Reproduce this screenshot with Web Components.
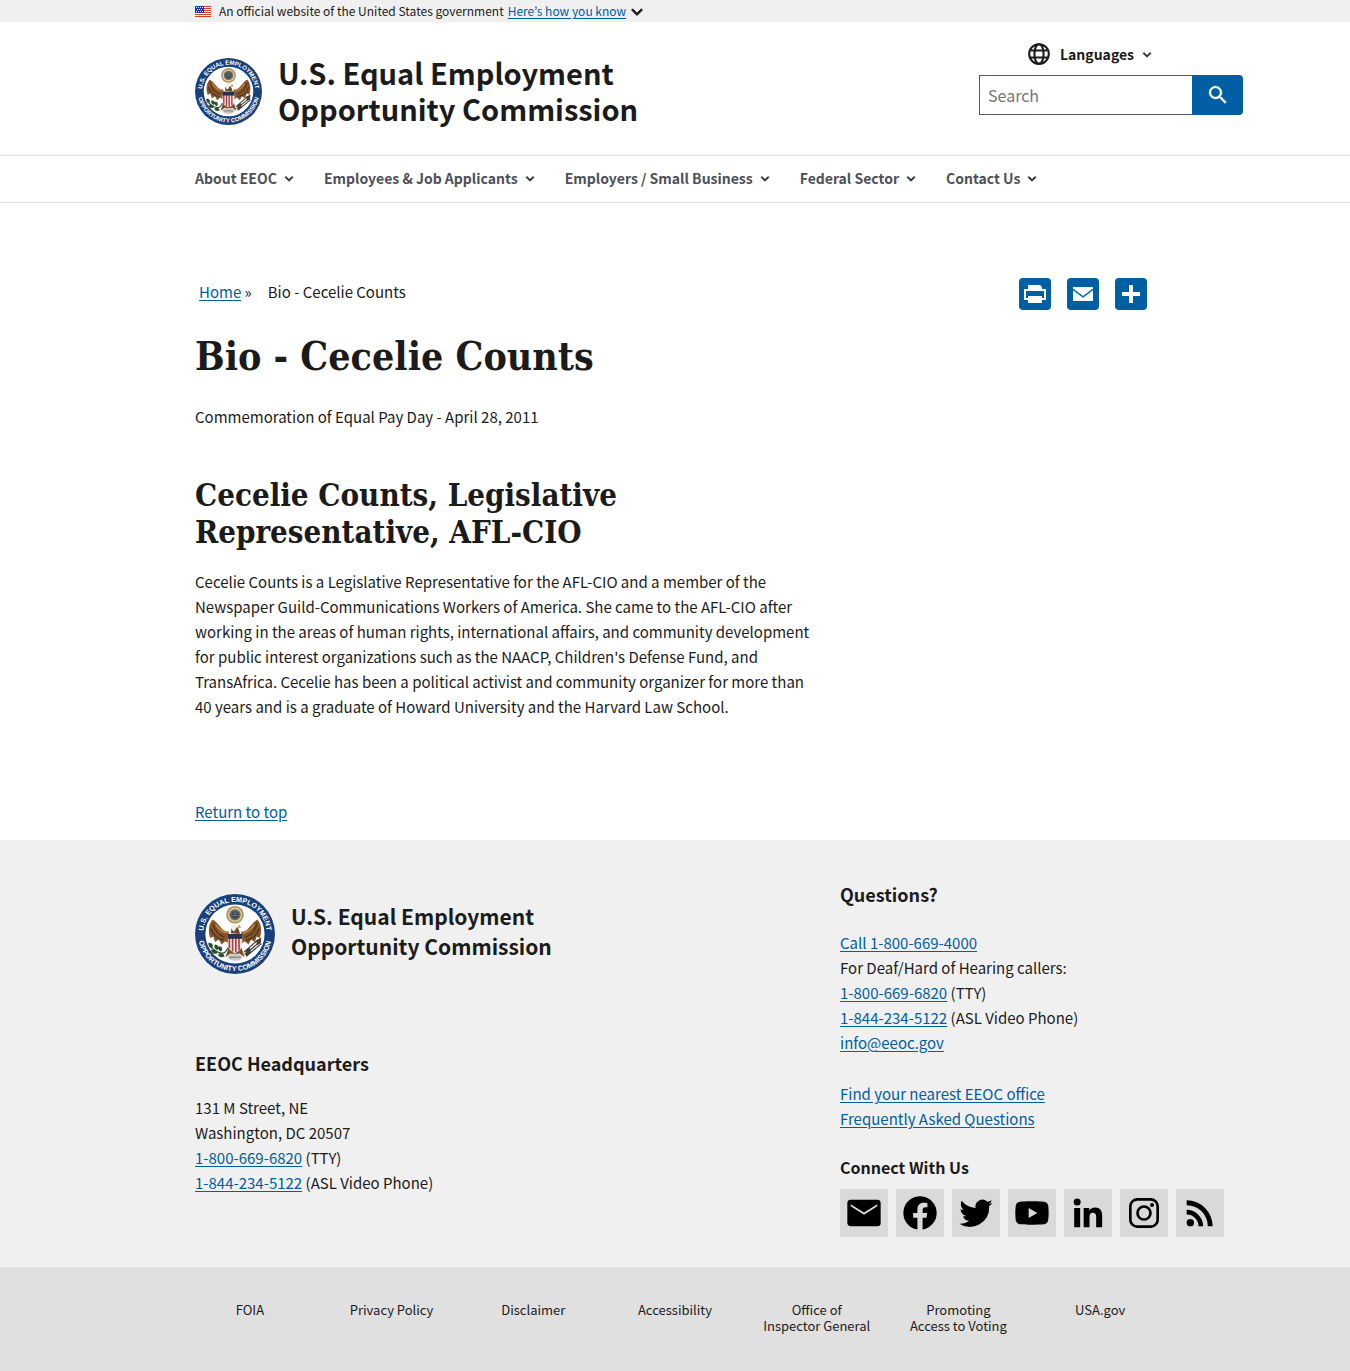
<!DOCTYPE html>
<html lang="en">
<head>
<meta charset="utf-8">
<meta name="viewport" content="width=device-width, initial-scale=1">
<title>Bio - Cecelie Counts | U.S. Equal Employment Opportunity Commission</title>
<style>
  :root {
    --sans: "Noto Sans CJK KR", "Noto Sans", sans-serif;
    --serif: "DejaVu Serif Condensed", "DejaVu Serif", serif;
    --ink: #1b1b1b;
    --link: #005ea2;
    --line: #dfe1e2;
  }
  body { margin: 0; background: #fff; color: var(--ink); font: 15px/25px var(--sans); }
</style>
</head>
<body>
<gov-banner></gov-banner>
<site-header></site-header>
<primary-nav>
  <nav-item>About EEOC</nav-item>
  <nav-item>Employees &amp; Job Applicants</nav-item>
  <nav-item>Employers / Small Business</nav-item>
  <nav-item>Federal Sector</nav-item>
  <nav-item>Contact Us</nav-item>
</primary-nav>
<page-article>
  <span slot="crumb">Bio - Cecelie Counts</span>
  <span slot="title">Bio - Cecelie Counts</span>
  <span slot="event">Commemoration of Equal Pay Day - April 28, 2011</span>
  <span slot="subtitle">Cecelie Counts, Legislative Representative, AFL-CIO</span>
  <span slot="text">Cecelie Counts is a Legislative Representative for the AFL-CIO and a member of the Newspaper Guild-Communications Workers of America. She came to the AFL-CIO after working in the areas of human rights, international affairs, and community development for public interest organizations such as the NAACP, Children's Defense Fund, and TransAfrica. Cecelie has been a political activist and community organizer for more than 40 years and is a graduate of Howard University and the Harvard Law School.</span>
</page-article>
<site-footer></site-footer>
<footer-links></footer-links>

<script>
const base = `
  *, *::before, *::after { box-sizing: border-box; }
  :host { display: block; }
  h1, h2, h3, p, ul, address { margin: 0; padding: 0; font-style: normal; }
  ul { list-style: none; }
  a { color: var(--link); text-underline-offset: 2px; }
  button { font: inherit; color: inherit; background: none; border: 0; padding: 0; cursor: pointer; }
  svg { display: block; }
  .wrap { max-width: 1024px; margin: 0 auto; padding: 0 32px; }
`;
function define(name, css, html) {
  const template = document.createElement('template');
  template.innerHTML = `<style>${base}${css}</style>${html}`;
  customElements.define(name, class extends HTMLElement {
    constructor() {
      super();
      this.attachShadow({ mode: 'open' }).append(template.content.cloneNode(true));
    }
  });
}

const glyphs = {
  chevron: '<path stroke="currentColor" stroke-width=".9" d="M16.600 9.600 12 14.200 7.400 9.600 6 11l6 6 6-6z"/>',
  globe: '<g fill="none" stroke="currentColor" stroke-width="2.100"><circle cx="12" cy="12" r="9.800"/><ellipse cx="12" cy="12" rx="4.600" ry="9.800"/><path d="M3.500 8.500h17M3.500 15.500h17"/></g>',
  search: '<path stroke="currentColor" stroke-width=".3" d="M15.500 14h-.79l-.28-.27A6.470 6.470 0 0 0 16 9.500 6.500 6.500 0 1 0 9.500 16c1.610 0 3.090-.59 4.230-1.570l.27.28v.79l5 4.990L20.490 19zm-6 0a4.500 4.500 0 1 1 0-9 4.500 4.500 0 0 1 0 9z"/>',
  mail: '<path d="M20 4H4a2 2 0 0 0-2 2v12c0 1.100.9 2 2 2h16a2 2 0 0 0 2-2V6a2 2 0 0 0-2-2zm0 4-8 5-8-5V6.700l8 5 8-5z"/>',
  facebook: '<path d="M22 12a10 10 0 1 0-11.560 9.880v-6.990H7.900V12h2.540V9.800c0-2.510 1.490-3.890 3.780-3.890 1.090 0 2.240.2 2.240.2v2.460h-1.260c-1.240 0-1.630.77-1.630 1.560V12h2.780l-.45 2.890h-2.330v6.990A10 10 0 0 0 22 12z"/>',
  twitter: '<path d="M22 5.900c-.7.300-1.500.600-2.400.700.900-.500 1.500-1.300 1.800-2.300-.8.500-1.700.800-2.600 1A4.100 4.100 0 0 0 11.800 9 11.600 11.600 0 0 1 3.400 4.700a4.100 4.100 0 0 0 1.300 5.500c-.7 0-1.300-.2-1.900-.5v.1c0 2 1.400 3.600 3.300 4a4.100 4.100 0 0 1-1.900.1 4.100 4.100 0 0 0 3.800 2.800A8.200 8.200 0 0 1 2 18.400 11.600 11.600 0 0 0 19.900 8c.8-.6 1.500-1.300 2.100-2.100z"/>',
  youtube: '<path d="M21.600 7.200a2.500 2.500 0 0 0-1.800-1.800C18.300 5 12 5 12 5s-6.300 0-7.800.4a2.500 2.500 0 0 0-1.800 1.800C2 8.700 2 12 2 12s0 3.300.4 4.800a2.500 2.500 0 0 0 1.800 1.800C5.700 19 12 19 12 19s6.300 0 7.800-.4a2.500 2.500 0 0 0 1.800-1.800C22 15.300 22 12 22 12s0-3.300-.4-4.800zM10 15V9l5.200 3z"/>',
  linkedin: '<circle cx="5.500" cy="5.400" r="2.100"/><path d="M3.700 9h3.600v11.500H3.700zM9.400 9h3.400v1.600c.5-.9 1.700-1.900 3.400-1.900 3.600 0 4.300 2.400 4.300 5.500v6.300h-3.600v-5.600c0-1.300 0-3-1.900-3s-2.100 1.400-2.100 2.900v5.700H9.400z"/>',
  instagram: '<g fill="none" stroke="currentColor" stroke-width="1.600"><rect x="3.800" y="3.800" width="16.400" height="16.400" rx="4.200"/><circle cx="12" cy="12" r="3.900"/></g><circle cx="16.800" cy="7.200" r="1.200"/>',
  rss: '<circle cx="6.200" cy="17.800" r="2.200"/><path d="M4 4.400v2.900A12.700 12.700 0 0 1 16.700 20h2.900A15.600 15.600 0 0 0 4 4.400zm0 5.700v2.800A7.100 7.100 0 0 1 11.100 20h2.800A9.900 9.900 0 0 0 4 10.100z"/>'
};
customElements.define('ui-icon', class extends HTMLElement {
  connectedCallback() {
    if (this.shadowRoot) return;
    this.attachShadow({ mode: 'open' }).innerHTML = `<style>
      :host { display: block; flex: none; width: var(--icon, 24px); height: var(--icon, 24px); }
      svg { display: block; width: 100%; height: 100%; overflow: visible; }</style>
      <svg viewBox="0 0 24 24" fill="currentColor" aria-hidden="true">${glyphs[this.getAttribute('name')]}</svg>`;
  }
});

/* Agency seal: lettered blue ring around an eagle with shield, branch and arrows. */
define('agency-seal', `
  :host { flex: none; width: var(--seal, 80px); height: var(--seal, 80px); }
  svg { width: 100%; height: 100%; }
  text { font: bold 9px "Liberation Sans", sans-serif; fill: #fff; }
`, `
  <svg viewBox="0 0 100 100" role="img" aria-label="EEOC seal">
    <defs>
      <path id="top" d="M14 66A39.600 39.600 0 1 1 86 66"/>
      <path id="low" d="M4.200 46A46 46 0 1 0 95.800 46"/>
    </defs>
    <circle cx="50" cy="50" r="50" fill="#17407c"/>
    <circle cx="50" cy="50" r="37" fill="#fff"/>
    <text text-anchor="middle"><textPath href="#top" startOffset="50%">U.S. EQUAL EMPLOYMENT</textPath></text>
    <text text-anchor="middle"><textPath href="#low" startOffset="50%">OPPORTUNITY COMMISSION</textPath></text>
    <circle cx="50" cy="26" r="11" fill="#a58f5c"/>
    <circle cx="50" cy="26" r="9" fill="#dccb9a"/>
    <circle cx="50" cy="26" r="7" fill="#6d6a55"/>
    <circle cx="50" cy="26" r="4.500" fill="#33446b"/>
    <path d="M48 24h4M47 27h6" stroke="#b5975a"/>
    <path d="M42 47C33 48 32 38 22 32c-5 5-6 15-3 23l4-2 2 7 5-3 3 6 5-4 5 4zM58 47C67 48 68 38 78 32c5 5 6 15 3 23l-4-2-2 7-5-3-3 6-5-4-5 4z" fill="#85552a"/>
    <path d="M23 37c1 8 6 14 14 17M20 43c2 8 8 13 16 15M77 37c-1 8-6 14-14 17M80 43c-2 8-8 13-16 15" fill="none" stroke="#4b3020" stroke-width="1.500"/>
    <path d="M26 38c3 6 7 9 14 11M74 38c-3 6-7 9-14 11" fill="none" stroke="#c58b3b" stroke-width="1.800"/>
    <path d="M42 67 38 79l7-5 5 7 5-7 7 5-4-12z" fill="#7a502c"/>
    <path d="M45 49c0-5 1-10 6-11 3 0 5 1 6 3l-4 1c2 3 3 5 3 8z" fill="#704725"/>
    <path d="M48 38c3-2 7 0 8 3l-4 1-3 5-3-2c0-3 0-6 2-7z" fill="#f4f0e7"/>
    <path d="M54 40l4 2-4 1z" fill="#daa12c"/>
    <path d="M41 51h18v12c0 6-5 9-9 11-4-2-9-5-9-11z" fill="#eee4df"/>
    <path d="M43 55v13M47 55v17M51 55v18M55 55v15" stroke="#ac3b43" stroke-width="2"/>
    <path d="M41 50h18v6H41z" fill="#22334e"/>
    <path d="M18 65c5 4 9 9 16 9 4 0 6-4 7-7" fill="none" stroke="#2d562f" stroke-width="1.700"/>
    <path d="M17 61c5 0 6 3 5 6-4 0-6-3-5-6zm8 2c5 1 6 4 3 7-4-2-5-4-3-7zm-5 7c5-1 8 1 8 4-4 2-7 0-8-4zm11-5c4 2 4 5 1 7-3-2-4-5-1-7zm-2 10c4-2 7 0 8 3-4 2-8 1-8-3z" fill="#294f2b"/>
    <path d="M62 76 82 59M64 78l19-16M61 73l18-16" stroke="#3e3931" stroke-width="1.500"/>
    <path d="m77 58 6-4-1 8-5 2zM63 70l5-3 2 6-6 5z" fill="#443d32"/>
    <ellipse cx="50" cy="79" rx="9" ry="4.500" fill="#c9c8c3"/>
    <path d="M43 79h14" stroke="#7e8079" stroke-width="1.500"/>
  </svg>`);

define('gov-banner', `
  :host { background: #f0f0f0; font-size: 12px; line-height: 22px; }
  .wrap { display: flex; align-items: center; gap: 8px; }
  .flag { flex: none; }
  button { display: flex; align-items: center; height: 22px; color: var(--link); }
  button span { text-decoration: underline; text-underline-offset: 2px; }
  ui-icon { --icon: 22px; color: var(--ink); }
  .note { margin-right: -4px; }
`, `
  <div class="wrap">
    <svg class="flag" width="16" height="11" viewBox="0 0 16 11" aria-hidden="true">
      <path fill="#fff" d="M0 0h16v11H0z"/>
      <path stroke="#db3e1f" d="M0 .5h16M0 2.500h16M0 4.500h16M0 6.500h16M0 8.500h16M0 10.500h16"/>
      <path fill="#1e33b1" d="M0 0h9v7H0z"/>
      <path stroke="#fff" stroke-dasharray="1 1" d="M1 1.500h7M2 3.500h6M1 5.500h7"/>
    </svg>
    <span class="note">An official website of the United States government</span>
    <button type="button" aria-expanded="false"><span>Here’s how you know</span><ui-icon name="chevron"></ui-icon></button>
  </div>`);

define('site-search', `
  form { display: flex; height: 40px; }
  input { flex: 1; min-width: 0; border: 1px solid #565c65; border-right: 0; border-radius: 0; padding: 0 8px;
    background: #fff; color: var(--ink); font: 16px/24px var(--sans); }
  input::placeholder { color: #757575; opacity: 1; }
  button { width: 51px; display: grid; place-items: center; background: var(--link); color: #fff; border-radius: 0 4px 4px 0; }
`, `
  <form role="search">
    <input type="search" placeholder="Search" aria-label="Search">
    <button type="submit" aria-label="Submit search"><ui-icon name="search"></ui-icon></button>
  </form>`);

define('site-header', `
  .wrap { display: flex; justify-content: space-between; align-items: flex-start; }
  .brand { display: flex; align-items: center; gap: 16px; padding: 32px 0 27px; color: var(--ink); text-decoration: none;
    font-size: 29px; line-height: 36px; font-weight: bold; }
  .brand span { padding-bottom: 2px; }
  agency-seal { --seal: 67px; }
  .tools { width: 264px; padding-top: 20px; display: flex; flex-direction: column; gap: 9px; }
  .lang { display: flex; align-items: center; align-self: flex-start; gap: 9px; margin-left: 48px; font-size: 14px; line-height: 24px; font-weight: bold; }
  .lang ui-icon + span + ui-icon { --icon: 16px; margin-left: -4px; }
  @media (min-width: 1264px) { .tools { margin-right: -88px; } }
`, `
  <header class="wrap">
    <a class="brand" href="#"><agency-seal></agency-seal><span>U.S. Equal Employment<br>Opportunity Commission</span></a>
    <div class="tools">
      <button class="lang" type="button" aria-expanded="false"><ui-icon name="globe"></ui-icon><span>Languages</span><ui-icon name="chevron"></ui-icon></button>
      <site-search></site-search>
    </div>
  </header>`);

define('primary-nav', `
  :host { border: solid var(--line); border-width: 1px 0; }
  nav { display: flex; flex-wrap: wrap; gap: 27px; }
`, `<nav class="wrap" aria-label="Primary"><slot></slot></nav>`);

define('nav-item', `
  button { display: flex; align-items: center; gap: 4px; padding-bottom: 2px; color: #4d5057; font-size: 14px; line-height: 44px; font-weight: bold; }
  ui-icon { --icon: 16px; color: var(--ink); }
`, `<button type="button" aria-expanded="false"><slot></slot><ui-icon name="chevron"></ui-icon></button>`);

define('share-tools', `
  :host { display: flex; gap: 16px; }
  button { width: 32px; height: 32px; border-radius: 4px; background: var(--link); }
  svg { width: 32px; height: 32px; fill: #fff; }
`, `
  <button type="button" aria-label="Print"><svg viewBox="0 0 32 32"><path d="M9 7h12l2 2v3H9zM5 11h22v11h-4v-2h2v-7H7v7h2v2H5zM9 18h14v7H9z"/></svg></button>
  <button type="button" aria-label="Email"><svg viewBox="0 0 32 32"><path d="M6 9h20v1.500l-10 7.500-10-7.500zM6 12.200l10 7.500 10-7.500V23H6z"/></svg></button>
  <button type="button" aria-label="Share"><svg viewBox="0 0 32 32"><path d="M14 7h4v7h7v4h-7v7h-4v-7H7v-4h7z"/></svg></button>`);

define('page-article', `
  .bar { display: flex; justify-content: space-between; align-items: flex-start; padding: 75px 8px 0 4px; font-size: 15px; line-height: 28px; }
  .crumbs { display: flex; gap: 16px; }
  .body { max-width: 624px; }
  h1, h2 { font-family: var(--serif); font-weight: bold; }
  h1 { margin-top: 22px; font-size: 39px; line-height: 48px; }
  .event { margin-top: 24px; }
  h2 { margin-top: 48px; font-size: 31px; line-height: 37px; max-width: 500px; }
  .text { margin-top: 18px; }
  .top { margin: 80px 0 16px; }
`, `
  <main class="wrap">
    <div class="bar">
      <nav class="crumbs" aria-label="Breadcrumb"><span><a href="#">Home</a> »</span><slot name="crumb"></slot></nav>
      <share-tools></share-tools>
    </div>
    <div class="body">
      <h1><slot name="title"></slot></h1>
      <p class="event"><slot name="event"></slot></p>
      <h2><slot name="subtitle"></slot></h2>
      <p class="text"><slot name="text"></slot></p>
    </div>
    <p class="top"><a href="#">Return to top</a></p>
  </main>`);

define('social-links', `
  ul { display: flex; gap: 8px; }
  a { display: grid; place-items: center; width: 48px; height: 48px; background: #d9d9d9; color: #000; }
  ui-icon { --icon: 40px; }
`, `<ul>${['mail', 'facebook', 'twitter', 'youtube', 'linkedin', 'instagram', 'rss'].map(n =>
    `<li><a href="#" aria-label="${n}"><ui-icon name="${n}"></ui-icon></a></li>`).join('')}</ul>`);

define('site-footer', `
  :host { background: #f0f0f0; }
  .wrap { display: flex; }
  .left { flex: 1; padding-top: 54px; }
  .right { flex: 0 0 315px; min-width: 0; padding: 42px 0 30px; }
  .brand { display: flex; align-items: center; gap: 16px; font-size: 21px; line-height: 30px; font-weight: bold; }
  .brand span { padding-bottom: 6px; }
  h3 { font-size: 18px; line-height: 24px; }
  .left h3 { margin-top: 77px; }
  .left address { margin-top: 20px; }
  .right address { margin-top: 24px; }
  .more { margin-top: 26px; }
  h4 { margin: 24px 0 10px; font-size: 16px; line-height: 24px; }
`, `
  <footer class="wrap">
    <div class="left">
      <div class="brand"><agency-seal></agency-seal><span>U.S. Equal Employment<br>Opportunity Commission</span></div>
      <h3>EEOC Headquarters</h3>
      <address>131 M Street, NE<br>Washington, DC 20507<br><a href="#">1-800-669-6820</a> (TTY)<br><a href="#">1-844-234-5122</a> (ASL Video Phone)</address>
    </div>
    <div class="right">
      <h3>Questions?</h3>
      <address><a href="#">Call 1-800-669-4000</a><br>For Deaf/Hard of Hearing callers:<br><a href="#">1-800-669-6820</a> (TTY)<br><a href="#">1-844-234-5122</a> (ASL Video Phone)<br><a href="#">info@eeoc.gov</a></address>
      <p class="more"><a href="#">Find your nearest EEOC office</a><br><a href="#">Frequently Asked Questions</a></p>
      <h4>Connect With Us</h4>
      <social-links></social-links>
    </div>
  </footer>`);

define('footer-links', `
  :host { background: #e0e0e0; font-size: 13px; line-height: 16px; }
  ul { max-width: 992px; margin: 0 auto; padding: 35px 0 37px; display: grid; grid-template-columns: repeat(7, 1fr); text-align: center; }
  a { color: var(--ink); text-decoration: none; }
`, `
  <nav aria-label="Footer"><ul>
    <li><a href="#">FOIA</a></li>
    <li><a href="#">Privacy Policy</a></li>
    <li><a href="#">Disclaimer</a></li>
    <li><a href="#">Accessibility</a></li>
    <li><a href="#">Office of<br>Inspector General</a></li>
    <li><a href="#">Promoting<br>Access to Voting</a></li>
    <li><a href="#">USA.gov</a></li>
  </ul></nav>`);
</script>
</body>
</html>
